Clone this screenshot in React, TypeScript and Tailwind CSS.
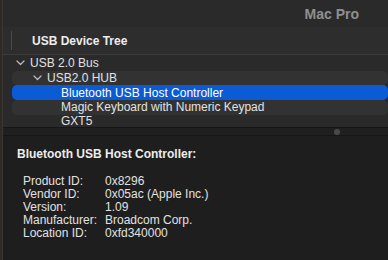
import React from "react";

const font = { fontFamily: '"Liberation Sans", Arial, sans-serif' };

function Chevron() {
  return (
    <svg width="9" height="6" viewBox="0 0 9 6" className="shrink-0">
      <path d="M1 1 L4.5 4.5 L8 1" fill="none" stroke="#bdbdbd" strokeWidth="1.2" strokeLinecap="round" strokeLinejoin="round" />
    </svg>
  );
}

type Row = { label: string; indent: number; chevron?: boolean; stripe?: boolean; selected?: boolean; last?: boolean };

const rows: Row[] = [
  { label: "USB 2.0 Bus", indent: 13, chevron: true },
  { label: "USB2.0 HUB", indent: 30, chevron: true, stripe: true },
  { label: "Bluetooth USB Host Controller", indent: 58, selected: true },
  { label: "Magic Keyboard with Numeric Keypad", indent: 58, stripe: true },
  { label: "GXT5", indent: 58, last: true },
];

const details: [string, string][] = [
  ["Product ID:", "0x8296"],
  ["Vendor ID:", "0x05ac (Apple Inc.)"],
  ["Version:", "1.09"],
  ["Manufacturer:", "Broadcom Corp."],
  ["Location ID:", "0xfd340000"],
];

export default function App() {
  return (
    <div className="w-[388px] h-[260px] flex overflow-hidden bg-[#1e1e1e]" style={font}>
      <div className="w-[3px] shrink-0 bg-[#2e2a25] border-r border-[#3a3630]" />
      <div className="flex-1 flex flex-col min-w-0">
        <div className="h-[27px] shrink-0 bg-[#2a2a2a] flex items-center justify-end pr-[29px]">
          <span className="text-[14px] font-bold text-[#8f8f8f] leading-none">Mac Pro</span>
        </div>
        <div className="h-[28px] shrink-0 bg-[#2d2d2d] flex items-center border-b border-[#3c3c3c]">
          <div className="ml-[8px] w-px h-[19px] bg-[#4a4a4a]" />
          <span className="ml-[20px] text-[12px] font-bold text-[#ececec] leading-none">USB Device Tree</span>
        </div>
        <div className="h-[72px] shrink-0 bg-[#2a2a2a] pt-[1px] flex flex-col overflow-hidden">
          {rows.map((r) => (
            <div
              key={r.label}
              className={
                (r.last ? "flex-1 items-start pt-[1px] " : "h-[14.7px] shrink-0 items-center ") +
                "ml-[9px] rounded-[5px] flex " +
                (r.selected ? "bg-[#0a5bd4]" : r.stripe ? "bg-[#323232]" : "")
              }
            >
              <div className="flex items-center gap-[5px]" style={{ paddingLeft: r.indent - 9 }}>
                {r.chevron && <Chevron />}
                <span
                  className={
                    "text-[12px] " +
                    (r.last ? "leading-[10px] " : "leading-none ") +
                    (r.selected ? "text-white" : "text-[#e2e2e2]")
                  }
                >
                  {r.label}
                </span>
              </div>
            </div>
          ))}
        </div>
        <div className="h-[9px] shrink-0 bg-[#202020] border-t border-[#161616] border-b border-b-[#161616] flex items-center justify-end pr-[48px]">
          <div className="w-[6px] h-[6px] rounded-full bg-[#4a4a4a]" />
        </div>
        <div className="flex-1 bg-[#1e1e1e] pl-[14px] pt-[11px]">
          <div className="text-[12px] font-bold text-[#ededed] leading-[14px]">Bluetooth USB Host Controller:</div>
          <div className="mt-[14px] pl-[6px] grid grid-cols-[82px_1fr]">
            {details.map(([k, v]) => (
              <React.Fragment key={k}>
                <div className="text-[12px] text-[#e2e2e2] leading-[13px]">{k}</div>
                <div className="text-[12px] text-[#e2e2e2] leading-[13px]">{v}</div>
              </React.Fragment>
            ))}
          </div>
        </div>
      </div>
    </div>
  );
}
